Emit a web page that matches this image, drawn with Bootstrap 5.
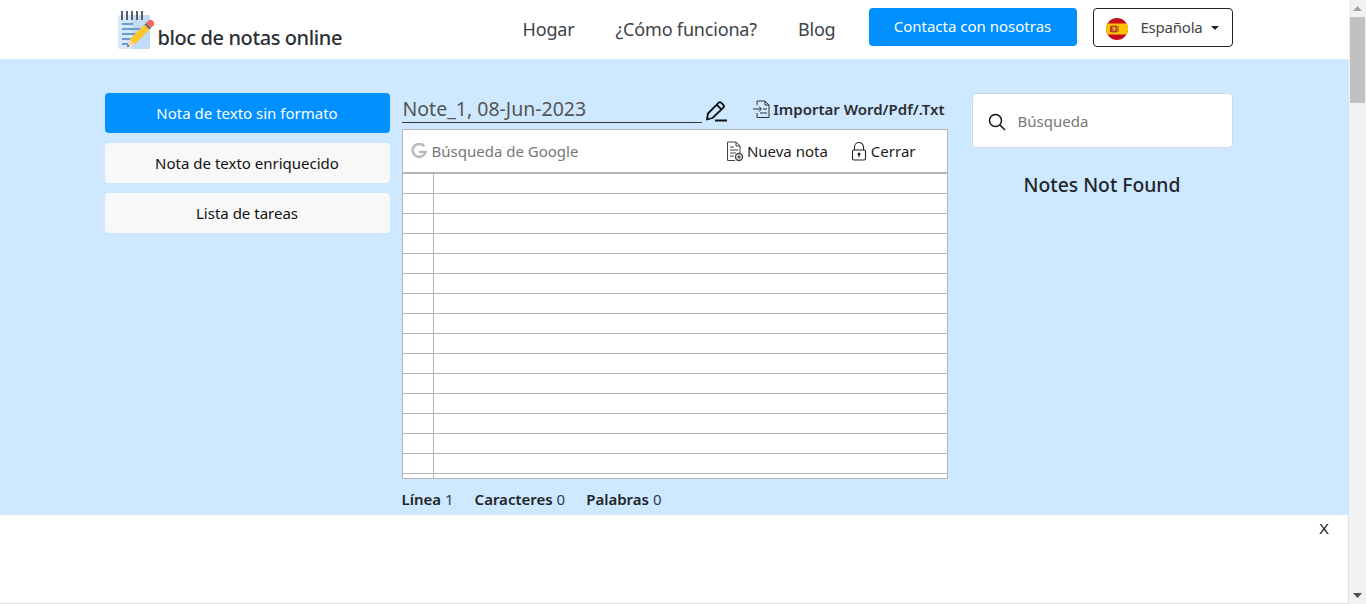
<!DOCTYPE html>
<html lang="es">
<head>
<meta charset="utf-8">
<title>bloc de notas online</title>
<link href="https://cdn.jsdelivr.net/npm/bootstrap@5.3.0/dist/css/bootstrap.min.css" rel="stylesheet">
<style>
html,body{height:100%;overflow:hidden}
body{font-family:"Noto Sans","Open Sans",sans-serif;color:#212529;font-size:15px;background:#fff}
.shell{height:100vh}
.pagecol{flex:1 1 auto;min-width:0;position:relative}
.fakebar{width:17px;background:#f1f1f1;flex:none;display:flex;flex-direction:column;align-items:center}
.fakebar .thumb{width:15px;height:86px;background:#c1c1c1;margin-top:0}
.fakebar .arr{height:17px;flex:none;display:flex;align-items:center;justify-content:center}
.topbar{height:59px;background:#fff;padding:0!important}
.topbar .container{height:59px}
.brandlink{font-size:20px;font-weight:500;color:#2b2f33;margin:10px 0 0;padding:0;letter-spacing:-.02em;gap:3px;align-items:flex-end}
.brandlink svg{margin-bottom:1px}
.brandlink span{line-height:27px}
.toplink{font-size:18px;color:#3d4247!important;padding:0!important;letter-spacing:-.01em}
.navlist{gap:41px;margin-right:33px}
.btn-blue{background:#0090ff;color:#fff;border:0;border-radius:4px;font-size:15px}
.btn-blue:hover{background:#0090ff;color:#fff}
.contactbtn{width:208px;height:38px;padding:0;margin-top:-1px;margin-bottom:5px}
.langbtn{width:140px;height:39px;margin-left:16px;margin-bottom:4px;border:1px solid #212529;border-radius:4px;background:#fff;color:#444;font-size:15px;padding:0 11px;letter-spacing:-.015em}
.langbtn svg{margin-top:3px}
.langbtn::after{margin-left:8px;color:#222}
.bluezone{background:#cee8ff;height:456px;padding-top:34px}
.sidebtn{display:block;width:100%;height:40px;margin-bottom:10px;padding:0;font-size:15px;border-radius:4px;border:0;line-height:41px}
.sidebtn.lightone{background:#f8f8f8;color:#111}
.titlerow{height:36px}
.titlefield{width:300px;height:30px;border-bottom:1px solid #333;font-size:19.500px;color:#555;line-height:32px;padding-left:1px}
.pencilmark{margin-left:3px;margin-top:7px}
.importlink{font-size:15px;font-weight:600;color:#2b2f33;margin-left:auto;margin-right:3px;gap:2px;margin-top:-4px}
.sheet{height:350px;border:1px solid #b5b5b5;background:#fff;display:flex;flex-direction:column}
.sheettools{height:44px;border-bottom:2px solid #b5b5b5;flex:none;padding-left:8px;font-size:15px}
.gsearch{color:#777;gap:5px}
.toolitem{color:#222;gap:3px}
.nuevaitem{margin-left:auto}
.cerraritem{margin-left:23px;margin-right:31px}
.lined{flex:1 1 auto;min-height:0;background-color:#fff;background-image:repeating-linear-gradient(to bottom,transparent 0,transparent 19px,#b5b5b5 19px,#b5b5b5 20px);display:flex}
.marginstrip{width:31px;border-right:1px solid #b5b5b5}
.statusline{font-size:15px;margin-top:10px;gap:21px;line-height:20px}
.statusline b{font-weight:600;color:#212529}
.statusline span{color:#2a3a55}
.searchbox{height:55px;background:#fff;border:1px solid #cfd8e0;border-radius:4px;padding:2px 0 0 15px;gap:12px;font-size:15px;color:#777}
.nofound{font-size:19.300px;font-weight:500;text-align:center;margin-top:24px;line-height:26px;color:#212529}
.adstrip{position:absolute;left:0;right:0;top:515px;height:89px;background:#fff;border:1px solid #e0e0e0;border-top:0;border-left:0}
.adclose{position:absolute;right:19px;top:4px;font-size:15px;line-height:20px;color:#222;font-family:"Liberation Sans",sans-serif}
</style>
</head>
<body>
<div class="shell d-flex">
<div class="pagecol">
  <nav class="navbar topbar">
    <div class="container d-flex align-items-start flex-nowrap">
      <a class="navbar-brand brandlink d-flex" href="#">
        <svg width="38" height="40" viewBox="0 0 38 40">
          <rect x="1" y="5" width="32" height="34" rx="2" fill="#d7e8f8"/>
          <path d="M15 5h16a2 2 0 0 1 2 2v30a2 2 0 0 1-2 2H15z" fill="#c0dcf5"/>
          <g fill="#55606a"><rect x="4" y="1" width="2" height="9"/><rect x="9" y="1" width="2" height="9"/><rect x="14" y="1" width="2" height="9"/><rect x="19" y="1" width="2" height="9"/><rect x="24" y="1" width="2" height="9"/></g>
          <g fill="#6a9ad0"><rect x="5" y="13" width="11" height="2"/><rect x="5" y="18" width="22" height="2"/><rect x="5" y="23" width="18" height="2"/><rect x="5" y="28" width="14" height="2"/><rect x="5" y="33" width="10" height="2"/></g>
          <path d="M27.500 14.500l5 5-15 15-5-5z" fill="#fbc52d"/>
          <path d="M12.500 29.500l5 5-7.500 2.500z" fill="#f6d9b4"/>
          <path d="M10.800 34.500l1.700 1.800-2.500.7z" fill="#444"/>
          <path d="M27.500 14.500l5 5 1.500-1.500-5-5z" fill="#5c6670"/>
          <path d="M29 13l5 5 2-2a3.500 3.500 0 0 0-5-5z" fill="#f2695c"/>
        </svg>
        <span>bloc de notas online</span>
      </a>
      <div class="d-flex align-items-center ms-auto h-100">
        <ul class="navbar-nav flex-row navlist">
          <li class="nav-item"><a class="nav-link toplink" href="#">Hogar</a></li>
          <li class="nav-item"><a class="nav-link toplink" href="#">¿Cómo funciona?</a></li>
          <li class="nav-item"><a class="nav-link toplink" href="#">Blog</a></li>
        </ul>
        <a class="btn btn-blue contactbtn d-flex align-items-center justify-content-center" href="#">Contacta con nosotras</a>
        <div class="dropdown">
          <button class="btn langbtn dropdown-toggle d-flex align-items-center" type="button">
            <svg class="me-2" width="24" height="24" viewBox="0 0 24 24">
              <defs><clipPath id="flagc"><circle cx="12" cy="12" r="11"/></clipPath></defs>
              <g clip-path="url(#flagc)">
                <rect width="24" height="24" fill="#c60b1e"/>
                <rect y="6.500" width="24" height="11" fill="#ffc400"/>
                <rect x="6" y="8.500" width="6" height="7" rx="1" fill="#b5452c"/>
                <rect x="7.500" y="10" width="3" height="3.500" fill="#e8a33a"/>
                <rect x="5" y="9" width="1" height="6" fill="#a33"/>
                <rect x="12.500" y="9" width="1" height="6" fill="#a33"/>
              </g>
            </svg>
            <span class="ms-1">Española</span>
          </button>
        </div>
      </div>
    </div>
  </nav>
  <main class="bluezone">
    <div class="container">
      <div class="row">
        <div class="col-3 p-0">
          <a class="btn btn-blue sidebtn" href="#">Nota de texto sin formato</a>
          <a class="btn sidebtn lightone" href="#">Nota de texto enriquecido</a>
          <a class="btn sidebtn lightone" href="#">Lista de tareas</a>
        </div>
        <div class="col-6">
          <div class="titlerow d-flex">
            <div class="titlefield">Note_1, 08-Jun-2023</div>
            <svg class="pencilmark" width="23" height="24" viewBox="0 0 23 24" fill="none" stroke="#111" stroke-width="1.800">
              <path d="M3 13.500L13.500 2.800a2 2 0 0 1 2.800 0l2 2a2 2 0 0 1 0 2.800L7.500 18l-5.500 1.500z" stroke-linejoin="round"/>
              <path d="M12 5l5 5"/>
              <path d="M10 20.500h12" stroke-width="2"/>
            </svg>
            <div class="importlink d-flex align-items-center">
              <svg width="19" height="20" viewBox="0 0 19 20" fill="none" stroke="#333" stroke-width="1">
                <path d="M5 6V2h8l4 4v12.500H5V14"/><path d="M13 2v4h4"/>
                <path d="M1 10h8M7 7.500L9.500 10 7 12.500"/><path d="M11 10h4M8 14h7"/>
              </svg>
              <span>Importar Word/Pdf/.Txt</span>
            </div>
          </div>
          <div class="sheet">
            <div class="sheettools d-flex align-items-center">
              <div class="gsearch d-flex align-items-center">
                <svg width="16" height="16" viewBox="0 0 16 16" fill="none" stroke="#bbb" stroke-width="2.600">
                  <path d="M13.300 3.300A6.500 6.500 0 1 0 14.500 9H8"/>
                </svg>
                <span>Búsqueda de Google</span>
              </div>
              <div class="toolitem nuevaitem d-flex align-items-center">
                <svg width="18" height="21" viewBox="0 0 18 21" fill="none" stroke="#444" stroke-width="1">
                  <path d="M9 19.500H1.500V1h8.500l4 4v7"/><path d="M10 1v4h4"/>
                  <path d="M4 6h4M4 9h8M4 12h6M4 15h4"/>
                  <circle cx="13" cy="16" r="3.500" fill="#fff" stroke-width="1.400"/><path d="M11 16h4M13 14v4" stroke="#333"/>
                </svg>
                <span>Nueva nota</span>
              </div>
              <div class="toolitem cerraritem d-flex align-items-center">
                <svg width="17" height="20" viewBox="0 0 17 20" fill="none" stroke="#222" stroke-width="1.100">
                  <rect x="1.500" y="9" width="13" height="10" rx="1.500"/>
                  <path d="M3.500 9V6a4.500 4.500 0 0 1 9 0v3"/>
                  <circle cx="8" cy="13" r="1" fill="#222"/><path d="M8 13v3"/>
                </svg>
                <span>Cerrar</span>
              </div>
            </div>
            <div class="lined"><div class="marginstrip"></div></div>
          </div>
          <div class="statusline d-flex">
            <div><b>Línea</b> <span>1</span></div>
            <div><b>Caracteres</b> <span>0</span></div>
            <div><b>Palabras</b> <span>0</span></div>
          </div>
        </div>
        <div class="col-3">
          <div class="searchbox d-flex align-items-center">
            <svg width="18" height="18" viewBox="0 0 18 18" fill="none" stroke="#111" stroke-width="1.500">
              <circle cx="7.500" cy="7.500" r="6"/><path d="M12 12l5 5"/>
            </svg>
            <span>Búsqueda</span>
          </div>
          <div class="nofound">Notes Not Found</div>
        </div>
      </div>
    </div>
  </main>
  <div class="adstrip"><span class="adclose">X</span></div>
</div>
<aside class="fakebar">
  <div class="arr"><svg width="9" height="5"><path d="M4.500 0L9 5H0z" fill="#a3a3a3"/></svg></div>
  <div class="thumb"></div>
  <div class="flex-grow-1"></div>
  <div class="arr"><svg width="9" height="5"><path d="M0 0h9L4.500 5z" fill="#505050"/></svg></div>
</aside>
</div>
<script src="https://cdn.jsdelivr.net/npm/bootstrap@5.3.0/dist/js/bootstrap.bundle.min.js"></script>
</body>
</html>
